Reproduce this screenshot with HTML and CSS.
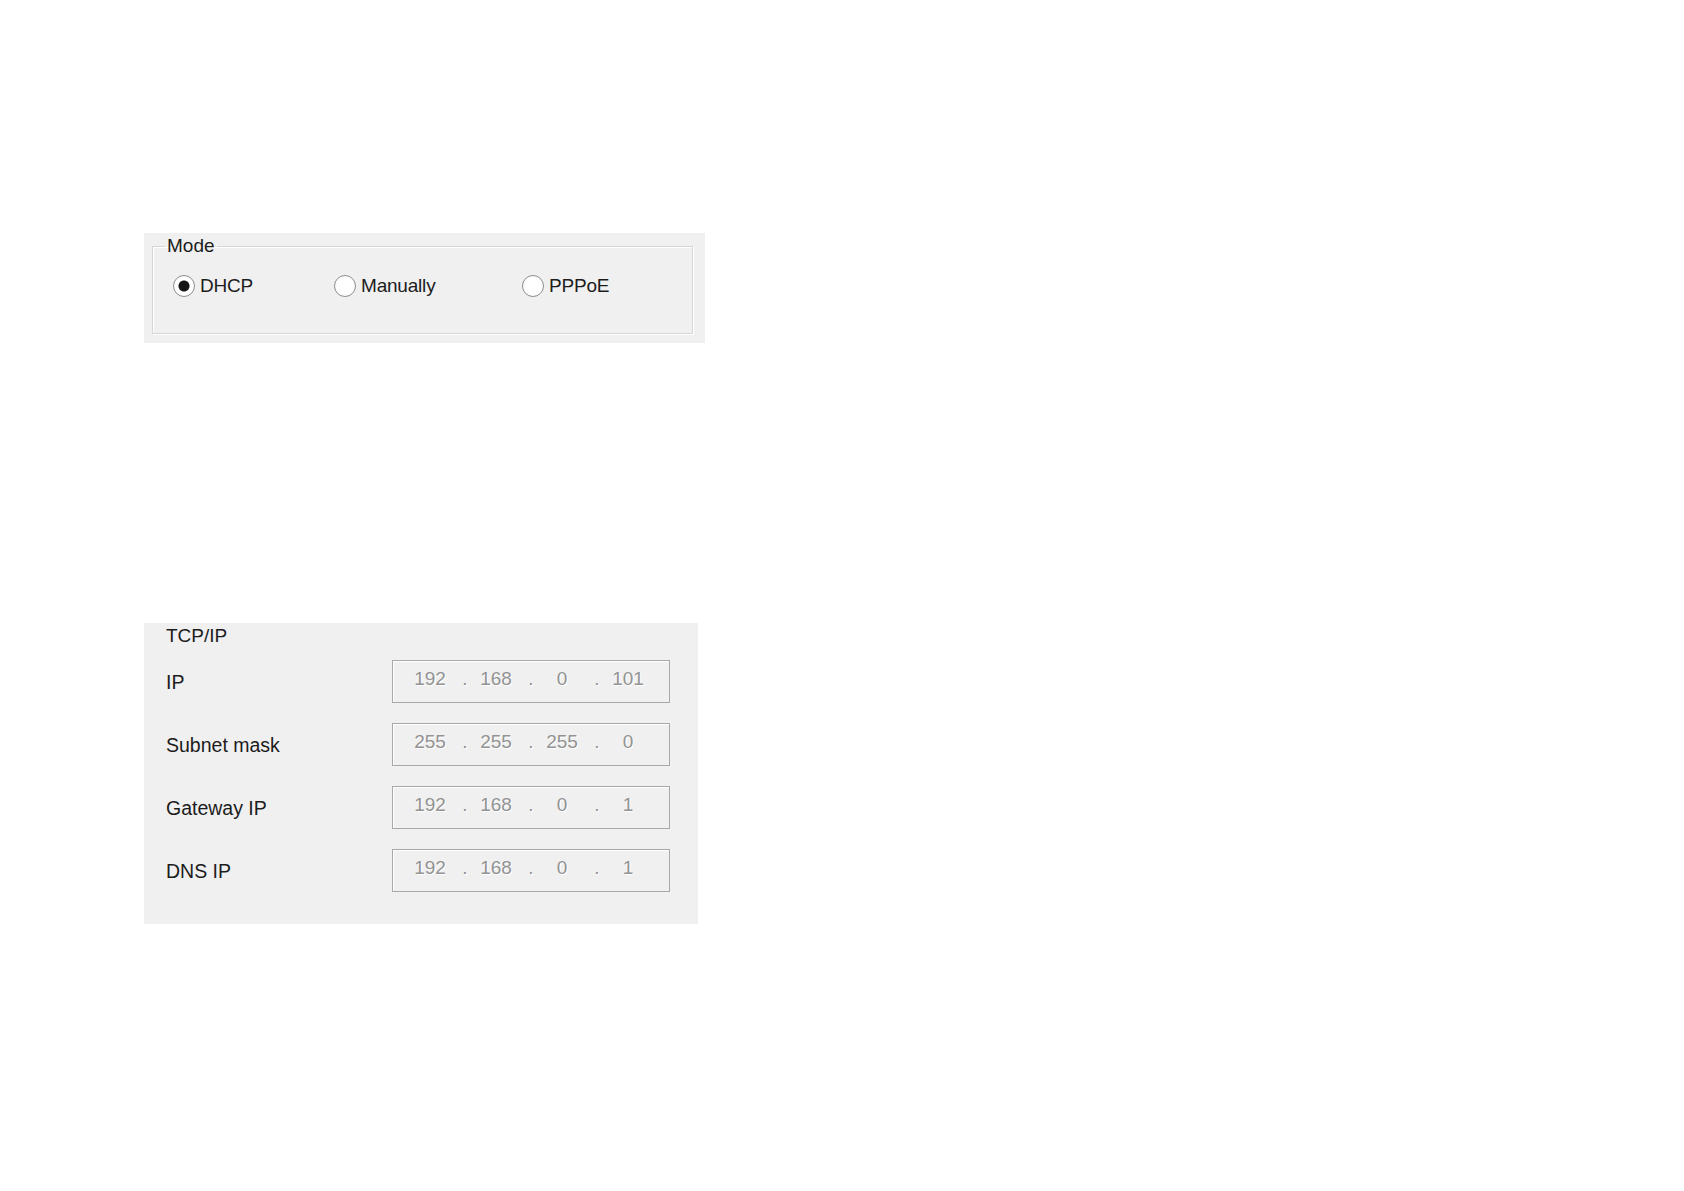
FILE: index.html
```html
<!DOCTYPE html>
<html lang="en">
<head>
    <meta charset="UTF-8">
    <title>Network settings</title>
    <link rel="stylesheet" href="styles.css">
</head>
<body>
<div class="panel mode-panel">
    <fieldset class="group">
        <legend>Mode</legend>
        <div class="radio-row">
            <label class="radio-item"><input type="radio" name="mode" checked><span>DHCP</span></label>
            <label class="radio-item"><input type="radio" name="mode"><span>Manually</span></label>
            <label class="radio-item"><input type="radio" name="mode"><span>PPPoE</span></label>
        </div>
    </fieldset>
</div>

<div class="panel tcp-panel">
    <div class="tcp-title">TCP/IP</div>
    <div class="tcp-rows">
        <div class="tcp-row">
            <span class="tcp-label">IP</span>
            <div class="ip-box">
                <span class="octet">192</span><span class="dot">.</span>
                <span class="octet">168</span><span class="dot">.</span>
                <span class="octet">0</span><span class="dot">.</span>
                <span class="octet">101</span>
            </div>
        </div>
        <div class="tcp-row">
            <span class="tcp-label">Subnet mask</span>
            <div class="ip-box">
                <span class="octet">255</span><span class="dot">.</span>
                <span class="octet">255</span><span class="dot">.</span>
                <span class="octet">255</span><span class="dot">.</span>
                <span class="octet">0</span>
            </div>
        </div>
        <div class="tcp-row">
            <span class="tcp-label">Gateway IP</span>
            <div class="ip-box">
                <span class="octet">192</span><span class="dot">.</span>
                <span class="octet">168</span><span class="dot">.</span>
                <span class="octet">0</span><span class="dot">.</span>
                <span class="octet">1</span>
            </div>
        </div>
        <div class="tcp-row">
            <span class="tcp-label">DNS IP</span>
            <div class="ip-box">
                <span class="octet">192</span><span class="dot">.</span>
                <span class="octet">168</span><span class="dot">.</span>
                <span class="octet">0</span><span class="dot">.</span>
                <span class="octet">1</span>
            </div>
        </div>
    </div>
</div>
</body>
</html>
```

FILE: styles.css
```css
body{
    margin: 0;
    padding: 233px 0 0 144px;
    background-color: #ffffff;
    font-family: "Liberation Sans", Arial, sans-serif;
    font-size: 19px;
    color: #1c1c1c;
}
.panel{
    background-color: #f0f0f0;
    box-sizing: border-box;
}
.mode-panel{
    width: 561px;
    padding: 2px 12px 9px 8px;
}
.group{
    margin: 0;
    min-width: 0;
    padding: 18px 12px 36px 12px;
    border: 1px solid #d5d5d5;
    box-shadow: 1px 1px 0 #ffffff, inset 1px 1px 0 #ffffff;
}
.group legend{
    padding: 0 2px;
    line-height: 22px;
}
.radio-row{
    display: grid;
    grid-template-columns: 161px 188px auto;
    padding-left: 8px;
}
.radio-item{
    display: flex;
    align-items: center;
    gap: 5px;
    line-height: 22px;
    letter-spacing: -0.2px;
}
.radio-item input{
    appearance: none;
    -webkit-appearance: none;
    width: 22px;
    height: 22px;
    margin: 0;
    border-radius: 50%;
    border: 1px solid #8e8e8e;
    background: radial-gradient(circle, #ffffff 55%, #e2e2e2 100%);
    box-shadow: inset 0 0 0 1px #ffffff;
    box-sizing: border-box;
}
.radio-item input:checked{
    background: radial-gradient(circle, #151515 0 5px, #ffffff 6px, #ffffff 55%, #e2e2e2 100%);
}
.tcp-panel{
    width: 554px;
    margin-top: 280px;
    padding: 2px 28px 32px 22px;
}
.tcp-title{
    line-height: 22px;
}
.tcp-rows{
    display: flex;
    flex-direction: column;
    gap: 20px;
    margin-top: 13px;
}
.tcp-row{
    display: grid;
    grid-template-columns: 226px 278px;
    align-items: center;
    height: 43px;
}
.tcp-label{
    font-size: 19.5px;
    padding-top: 2px;
}
.ip-box{
    display: flex;
    align-items: center;
    height: 43px;
    box-sizing: border-box;
    padding: 0 0 5px 11px;
    border: 1px solid #a8a8a8;
    box-shadow: inset 1px 1px 0 #ffffff;
    color: #939393;
    text-shadow: 1px 1px 0 #ffffff;
}
.octet{
    width: 52px;
    text-align: center;
}
.dot{
    width: 14px;
    padding-left: 4px;
    box-sizing: border-box;
    text-align: center;
}
```
